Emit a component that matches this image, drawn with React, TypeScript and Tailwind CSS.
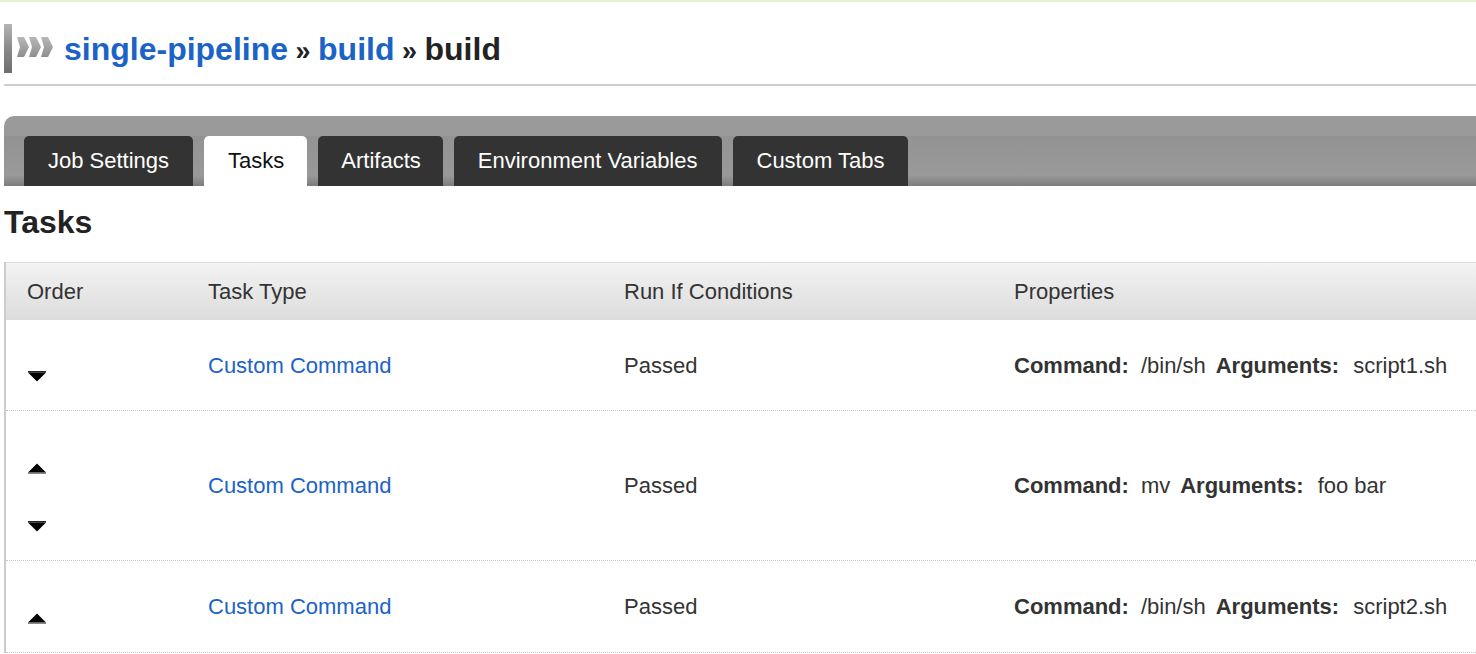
import React from "react";

const font = { fontFamily: '"Liberation Sans", Arial, Helvetica, sans-serif' };

function Logo() {
  return (
    <svg width="50" height="49" viewBox="0 0 50 49" className="shrink-0">
      <defs>
        <linearGradient id="bar" x1="0" y1="0" x2="0" y2="1">
          <stop offset="0" stopColor="#b5b5b5" />
          <stop offset="0.5" stopColor="#8a8a8a" />
          <stop offset="1" stopColor="#6e6e6e" />
        </linearGradient>
        <linearGradient id="chev" x1="0" y1="0" x2="0" y2="1">
          <stop offset="0" stopColor="#b8b8b8" />
          <stop offset="1" stopColor="#8e8e8e" />
        </linearGradient>
      </defs>
      <rect x="0" y="0" width="8" height="49" fill="url(#bar)" />
      <polygon points="13,13 20,13 25,23 20,33 13,33 16,23" fill="url(#chev)" />
      <polygon points="25,13 32,13 37,23 32,33 25,33 28,23" fill="url(#chev)" />
      <polygon points="37,13 44,13 49,23 44,33 37,33 40,23" fill="url(#chev)" />
    </svg>
  );
}

function Up() {
  return (
    <svg width="18" height="11" viewBox="0 0 18 11" className="block">
      <polygon points="9,0.5 18,9.5 0,9.5" fill="#000" />
      <rect x="0" y="9.5" width="18" height="1.2" fill="#555" />
    </svg>
  );
}

function Down() {
  return (
    <svg width="18" height="11" viewBox="0 0 18 11" className="block">
      <rect x="0" y="0" width="18" height="1.5" fill="#222" />
      <polygon points="0,1.5 18,1.5 9,10.5" fill="#000" />
    </svg>
  );
}

const tabs: { label: string; cls: string }[] = [
  { label: "Job Settings", cls: "bg-[#333333] text-white px-[24px]" },
  { label: "Tasks", cls: "bg-white text-[#111] pl-[24px] pr-[23px]" },
  { label: "Artifacts", cls: "bg-[#333333] text-white pl-[23px] pr-[22px]" },
  { label: "Environment Variables", cls: "bg-[#333333] text-white px-[24px]" },
  { label: "Custom Tabs", cls: "bg-[#333333] text-white px-[24px]" },
];

type Row = {
  h: string;
  up: boolean;
  down: boolean;
  cmd: string;
  args: string;
};

const rows: Row[] = [
  { h: "h-[91px]", up: false, down: true, cmd: "/bin/sh", args: "script1.sh" },
  { h: "h-[150px]", up: true, down: true, cmd: "mv", args: "foo bar" },
  { h: "h-[92px]", up: true, down: false, cmd: "/bin/sh", args: "script2.sh" },
];

export default function App() {
  return (
    <div className="w-[1476px] h-[654px] overflow-hidden bg-white text-[#333]" style={font}>
      <div className="h-[2px] bg-[#e0f2d2]" />
      <div className="h-[82px] pt-[22px] pl-[4px]">
        <div className="flex items-center gap-[10px]">
          <Logo />
          <h1 className="text-[32px] font-bold leading-none whitespace-nowrap">
            <span className="text-[#1b63c6]">single-pipeline</span>
            <span className="text-[#222] text-[27px]"> » </span>
            <span className="text-[#1b63c6]">build</span>
            <span className="text-[#222] text-[27px]"> » </span>
            <span className="text-[#222]">build</span>
          </h1>
        </div>
      </div>
      <div className="ml-[4px] h-[2px] bg-[#cdcdcd]" />

      <div className="ml-[4px] mt-[30px] h-[70px] rounded-tl-[10px] bg-[linear-gradient(to_bottom,#9a9a9a_0%,#9a9a9a_28%,#939393_29%,#999999_85%,#7c7c7c_100%)] pl-[20px] pt-[20px] flex gap-[11px]">
        {tabs.map((t) => (
          <div
            key={t.label}
            className={
              "h-[50px] rounded-t-[5px] flex items-center text-[22px] leading-none whitespace-nowrap " + t.cls
            }
          >
            {t.label}
          </div>
        ))}
      </div>

      <div className="h-[76px] pl-[4px] pb-[4px] flex items-center">
        <h2 className="text-[32px] font-bold leading-none text-[#222]">Tasks</h2>
      </div>

      <div className="ml-[4px] border-l-2 border-[#cccccc]">
        <div className="h-[58px] border-t border-[#dedede] bg-[linear-gradient(to_bottom,#f3f3f3,#dcdcdc)] grid grid-cols-[181px_416px_390px_1fr] items-center text-[22px] text-[#333]">
          <div className="pl-[21px]">Order</div>
          <div className="pl-[21px]">Task Type</div>
          <div className="pl-[21px]">Run If Conditions</div>
          <div className="pl-[21px]">Properties</div>
        </div>
        {rows.map((r, i) => (
          <div
            key={i}
            className={
              r.h +
              " grid grid-cols-[181px_416px_390px_1fr] border-b border-dotted border-[#c8c8c8] text-[22px]"
            }
          >
            <div className="pl-[22px] flex flex-col">
              {r.up && (
                <div className="pt-[52px]">
                  <Up />
                </div>
              )}
              {r.down && (
                <div className={r.up ? "pt-[47px]" : "pt-[51px]"}>
                  <Down />
                </div>
              )}
            </div>
            <div className="pl-[21px] flex items-center text-[#1b63c6]">Custom Command</div>
            <div className="pl-[21px] flex items-center">Passed</div>
            <div className="pl-[21px] flex items-center whitespace-nowrap">
              <span className="font-bold mr-[12px]">Command:</span>
              <span className="mr-[10px]">{r.cmd}</span>
              <span className="font-bold mr-[14px]">Arguments:</span>
              <span>{r.args}</span>
            </div>
          </div>
        ))}
      </div>
    </div>
  );
}
